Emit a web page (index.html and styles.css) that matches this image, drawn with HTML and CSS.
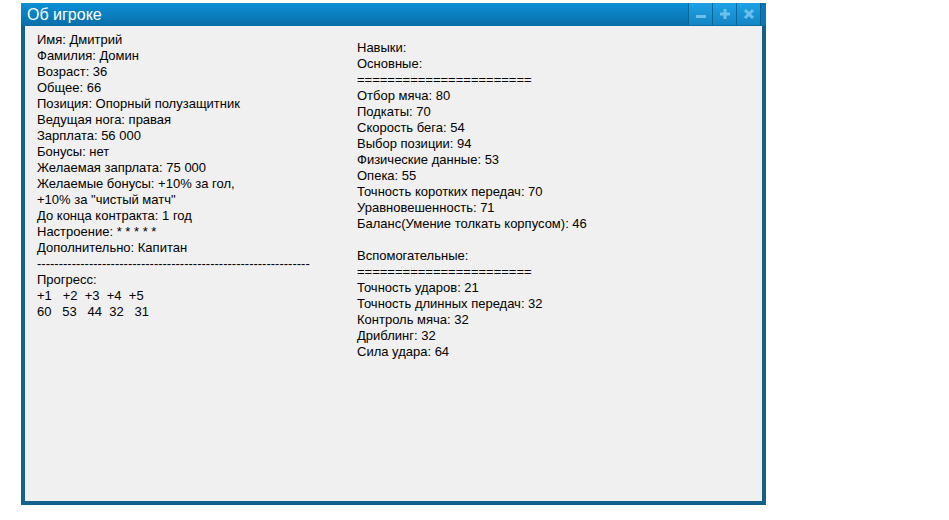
FILE: index.html
```html
<!DOCTYPE html>
<html lang="ru">
<head>
<meta charset="utf-8">
<title>Об игроке</title>
<link rel="stylesheet" href="styles.css">
</head>
<body>
<div class="window">
  <div class="titlebar">
    <div class="title">Об игроке</div>
    <div class="buttons">
      <div class="btn"><svg width="12" height="12" viewBox="0 0 12 12"><rect x="1" y="7" width="10" height="3" fill="#6cc0ea"/></svg></div>
      <div class="btn"><svg width="12" height="12" viewBox="0 0 12 12"><rect x="1" y="4.5" width="10" height="3" fill="#6cc0ea"/><rect x="4.5" y="1" width="3" height="10" fill="#6cc0ea"/></svg></div>
      <div class="btn"><svg width="12" height="12" viewBox="0 0 12 12"><path d="M2 2 L10 10 M10 2 L2 10" stroke="#6cc0ea" stroke-width="3"/></svg></div>
      <div class="edge"></div>
    </div>
  </div>
  <div class="content">
    <div class="col left">
      <div>Имя: Дмитрий</div>
      <div>Фамилия: Домин</div>
      <div>Возраст: 36</div>
      <div>Общее: 66</div>
      <div>Позиция: Опорный полузащитник</div>
      <div>Ведущая нога: правая</div>
      <div>Зарплата: 56 000</div>
      <div>Бонусы: нет</div>
      <div>Желаемая запрлата: 75 000</div>
      <div>Желаемые бонусы: +10% за гол,</div>
      <div>+10% за "чистый матч"</div>
      <div>До конца контракта: 1 год</div>
      <div>Настроение: * * * * *</div>
      <div>Дополнительно: Капитан</div>
      <div>---------------------------------------------------------------</div>
      <div>Прогресс:</div>
      <div>+1&nbsp;&nbsp;&nbsp;+2&nbsp;&nbsp;+3&nbsp;&nbsp;+4&nbsp;&nbsp;+5</div>
      <div>60&nbsp;&nbsp;&nbsp;53&nbsp;&nbsp;&nbsp;44&nbsp;&nbsp;32&nbsp;&nbsp;&nbsp;31</div>
    </div>
    <div class="col right">
      <div>Навыки:</div>
      <div>Основные:</div>
      <div>=======================</div>
      <div>Отбор мяча: 80</div>
      <div>Подкаты: 70</div>
      <div>Скорость бега: 54</div>
      <div>Выбор позиции: 94</div>
      <div>Физические данные: 53</div>
      <div>Опека: 55</div>
      <div>Точность коротких передач: 70</div>
      <div>Уравновешенность: 71</div>
      <div>Баланс(Умение толкать корпусом): 46</div>
      <div class="gap">&nbsp;</div>
      <div>Вспомогательные:</div>
      <div>=======================</div>
      <div>Точность ударов: 21</div>
      <div>Точность длинных передач: 32</div>
      <div>Контроль мяча: 32</div>
      <div>Дриблинг: 32</div>
      <div>Сила удара: 64</div>
    </div>
  </div>
</div>
</body>
</html>
```
FILE: styles.css
```css
html, body {
  margin: 0;
  padding: 0;
  background: #ffffff;
}
body {
  font-family: "Liberation Sans", Arial, sans-serif;
}
.window {
  margin: 3px 0 0 21px;
  width: 745px;
  height: 502px;
  background: #12628b;
  display: flex;
  flex-direction: column;
  box-sizing: border-box;
}
.titlebar {
  height: 23px;
  display: flex;
  align-items: stretch;
  background: linear-gradient(to bottom, #0b8fd5 0%, #0a7fc0 50%, #096da7 100%);
  flex: none;
}
.title {
  color: #ffffff;
  font-size: 16px;
  line-height: 24px;
  padding-left: 6px;
}
.buttons {
  margin-left: auto;
  display: flex;
  height: 22px;
}
.btn {
  width: 23px;
  border-left: 1px solid #0c6699;
  background: linear-gradient(to bottom, #1ba3e6 0%, #1890d2 60%, #1585c4 100%);
  display: flex;
  align-items: center;
  justify-content: center;
}
.edge {
  width: 5px;
  border-left: 1px solid #0b5f8f;
  background: #0e76b2;
}
.content {
  flex: 1;
  margin: 0 4px 4px 4px;
  background: #f0f0f0;
  padding: 6px 12px 0 12px;
  display: grid;
  grid-template-columns: 320px 1fr;
  font-size: 13px;
  line-height: 16px;
  color: #000000;
}
.col div {
  white-space: nowrap;
}
.right {
  padding-top: 8px;
}
```
